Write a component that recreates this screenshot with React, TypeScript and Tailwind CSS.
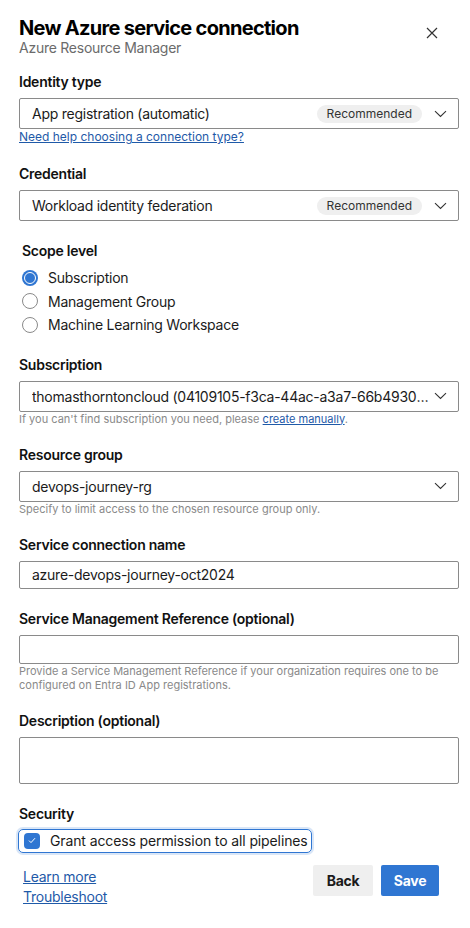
import React from 'react';

const font = { fontFamily: 'Inter, "Noto Sans", sans-serif' };

function Chevron() {
  return (
    <svg width="13" height="8" viewBox="0 0 13 8" fill="none" className="shrink-0">
      <path d="M1 1.2 L6.5 6.5 L12 1.2" stroke="#333" strokeWidth="1.1" />
    </svg>
  );
}

function Badge() {
  return (
    <span className="mr-3 rounded-full bg-[#efefef] px-[10px] h-[18px] flex items-center text-[12px] text-[#333] leading-none tracking-normal">
      Recommended
    </span>
  );
}

function Select({ value, badge }: { value: string; badge?: boolean }) {
  return (
    <div className="mt-1.5 h-[31px] border border-[#8a8a8a] rounded-[2px] flex items-center pl-3 pr-[11px]">
      <span className="flex-1 truncate text-[14px] text-[#1b1b1b]">{value}</span>
      {badge && <Badge />}
      <Chevron />
    </div>
  );
}

function Label({ children, className = '' }: { children: React.ReactNode; className?: string }) {
  return <div className={`text-[14px] leading-5 font-semibold text-[#111] ${className}`}>{children}</div>;
}

function Help({ children }: { children: React.ReactNode }) {
  return <div className="text-[11px] leading-[14px] text-[#8a8a8a] tracking-normal">{children}</div>;
}

function Radio({ label, checked }: { label: string; checked?: boolean }) {
  return (
    <div className="flex items-center h-[23.5px] pl-[3px]">
      {checked ? (
        <span className="w-4 h-4 rounded-full bg-[#2f76d2] flex items-center justify-center">
          <span className="w-3 h-3 rounded-full border border-white bg-[#2f76d2]" />
        </span>
      ) : (
        <span className="w-4 h-4 rounded-full border border-[#8a8a8a] bg-white" />
      )}
      <span className="ml-[10px] text-[14px] text-[#1b1b1b]">{label}</span>
    </div>
  );
}

export default function App() {
  return (
    <div className="w-[470px] h-[928px] bg-white pl-[19px] pr-[11px] pt-4 text-[#1b1b1b] tracking-[-0.25px]" style={font}>
      <div className="flex items-start justify-between">
        <div>
          <div className="text-[20px] leading-6 font-bold tracking-[-0.7px] text-black">New Azure service connection</div>
          <div className="text-[14px] leading-4 text-[#6b6b6b]">Azure Resource Manager</div>
        </div>
        <button className="mt-[11px] mr-[21px]">
          <svg width="12" height="12" viewBox="0 0 12 12">
            <path d="M1 1 L11 11 M11 1 L1 11" stroke="#333" strokeWidth="1.2" />
          </svg>
        </button>
      </div>

      <Label className="mt-4">Identity type</Label>
      <Select value="App registration (automatic)" badge />
      <a className="block text-[12px] leading-4 text-[#1f5aa8] underline tracking-normal">Need help choosing a connection type?</a>

      <Label className="mt-[19px]">Credential</Label>
      <Select value="Workload identity federation" badge />

      <Label className="mt-5 ml-[3px]">Scope level</Label>
      <div className="mt-[5px]">
        <Radio label="Subscription" checked />
        <Radio label="Management Group" />
        <Radio label="Machine Learning Workspace" />
      </div>

      <Label className="mt-[18px]">Subscription</Label>
      <Select value="thomasthorntoncloud (04109105-f3ca-44ac-a3a7-66b4930c1f2e)" />
      <Help>
        If you can't find subscription you need, please{' '}
        <a className="text-[#1f5aa8] underline">create manually</a>.
      </Help>

      <Label className="mt-[19px]">Resource group</Label>
      <Select value="devops-journey-rg" />
      <Help>Specify to limit access to the chosen resource group only.</Help>

      <Label className="mt-[19px]">Service connection name</Label>
      <div className="mt-1.5 h-[28px] border border-[#8a8a8a] rounded-[2px] flex items-center px-3 text-[14px]">
        azure-devops-journey-oct2024
      </div>

      <Label className="mt-5">Service Management Reference (optional)</Label>
      <div className="mt-1.5 h-[29px] border border-[#8a8a8a] rounded-[2px]" />
      <Help>
        Provide a Service Management Reference if your organization requires one to be configured on Entra ID App registrations.
      </Help>

      <Label className="mt-[19px]">Description (optional)</Label>
      <div className="mt-1.5 h-[47px] border border-[#8a8a8a] rounded-[2px]" />

      <Label className="mt-5">Security</Label>
      <div className="mt-[5px] -ml-[1px] inline-flex items-center h-[24px] pl-[5px] pr-[3px] border border-[#2f76d2] rounded-[5px] shadow-[0_0_0_2px_rgba(47,118,210,0.18)]">
        <span className="w-4 h-4 rounded-[4px] bg-[#2f76d2] flex items-center justify-center">
          <svg width="8" height="7" viewBox="0 0 8 7">
            <path d="M1 3.6 L3 5.6 L7 1.2" stroke="white" strokeWidth="1" fill="none" />
          </svg>
        </span>
        <span className="ml-[10px] text-[14px] text-[#1b1b1b] tracking-[-0.12px]">Grant access permission to all pipelines</span>
      </div>

      <div className="mt-[12px] flex items-start justify-between">
        <div className="pl-[4px] flex flex-col mt-[2px]">
          <a className="text-[14px] leading-5 text-[#1f5aa8] underline">Learn more</a>
          <a className="text-[14px] leading-5 text-[#1f5aa8] underline">Troubleshoot</a>
        </div>
        <div className="flex gap-2 mr-[20px]">
          <button className="h-[31px] w-[60px] rounded-[2px] bg-[#efefef] text-[14px] font-bold text-[#1b1b1b]">Back</button>
          <button className="h-[31px] w-[58px] rounded-[2px] bg-[#2f76d2] text-[14px] font-bold text-white">Save</button>
        </div>
      </div>
    </div>
  );
}
